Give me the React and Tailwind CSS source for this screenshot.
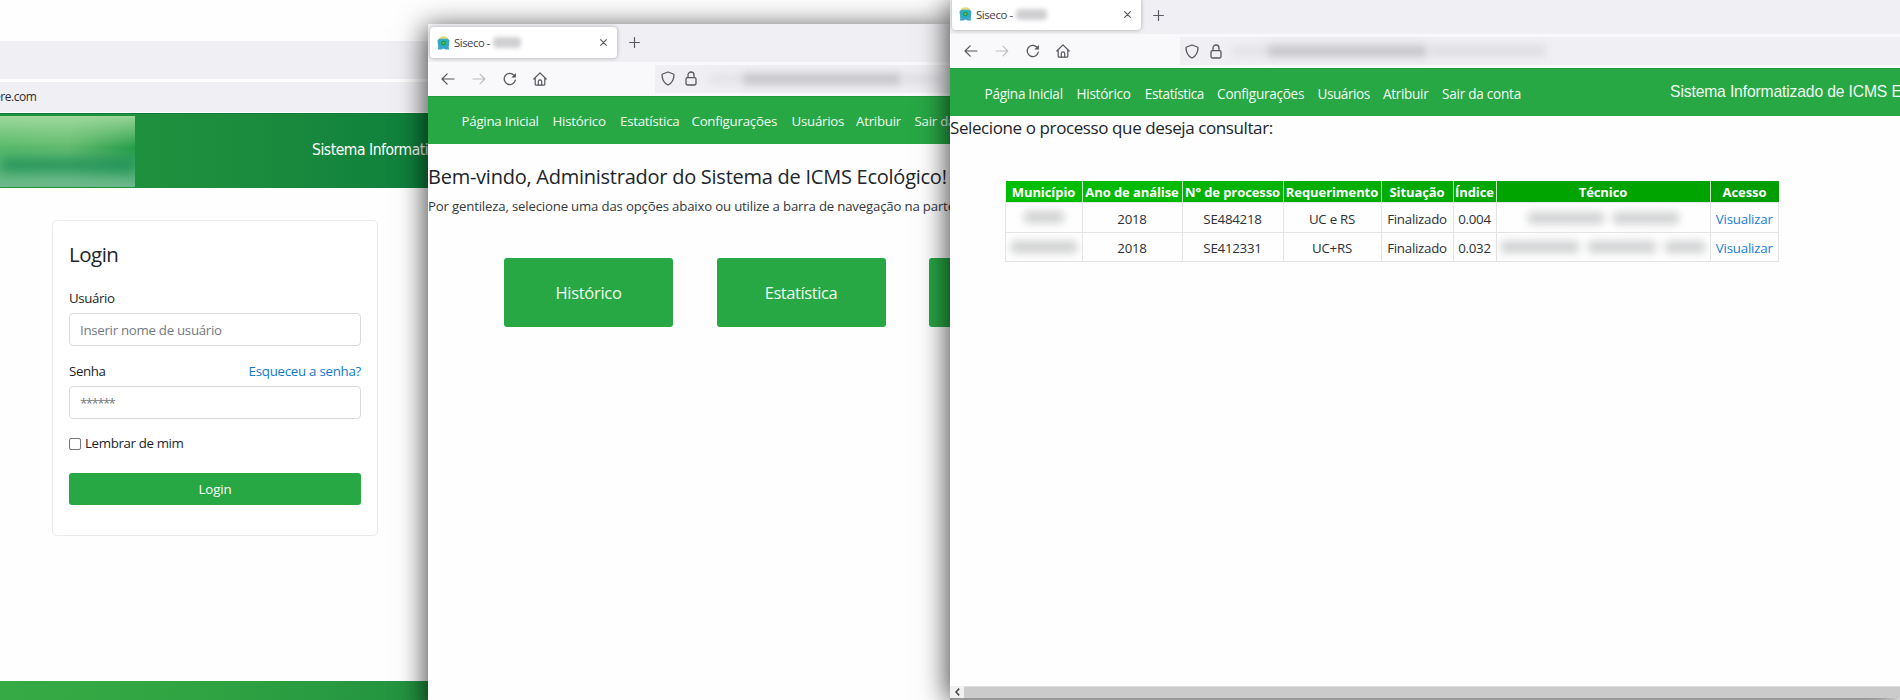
import React from "react";

const Back = ({ className = "" }) => (
  <svg className={className} width="14" height="14" viewBox="0 0 14 14" fill="none" stroke="currentColor" strokeWidth="1.2" strokeLinecap="round" strokeLinejoin="round">
    <path d="M13 7H1.2M6.2 1.8 1 7l5.2 5.2" />
  </svg>
);

const Forward = ({ className = "" }) => (
  <svg className={className} width="14" height="14" viewBox="0 0 14 14" fill="none" stroke="currentColor" strokeWidth="1.1" strokeLinecap="round" strokeLinejoin="round">
    <path d="M1 7h11.6M8 2.2 12.8 7 8 11.8" />
  </svg>
);

const Reload = ({ className = "" }) => (
  <svg className={className} width="14" height="14" viewBox="0 0 14 14" fill="none" stroke="currentColor" strokeWidth="1.3" strokeLinecap="round">
    <path d="M12.3 8.2A5.6 5.6 0 1 1 10.9 3.1" />
    <path d="M12.9 1v4.6H8.3z" fill="currentColor" stroke="none" />
  </svg>
);

const Home = ({ className = "" }) => (
  <svg className={className} width="14" height="14" viewBox="0 0 14 14" fill="none" stroke="currentColor" strokeWidth="1.2" strokeLinecap="round" strokeLinejoin="round">
    <path d="M.8 7 7 .9 13.2 7M2.2 6v6.2q0 1 1 1h7.6q1 0 1-1V6" />
    <path d="M5.3 13V9.6a1.7 1.7 0 0 1 3.4 0V13" />
  </svg>
);

const Shield = ({ className = "" }) => (
  <svg className={className} width="14" height="15" viewBox="0 0 14 15" fill="none" stroke="currentColor" strokeWidth="1.3" strokeLinejoin="round">
    <path d="M7 1 12.4 3q.6.2.6.9C12.9 8.4 10.9 12 7 14 3.1 12 1.1 8.4 1 3.900q0-.7.6-.9z" />
  </svg>
);

const Lock = ({ className = "" }) => (
  <svg className={className} width="12" height="15" viewBox="0 0 12 15" fill="none" stroke="currentColor" strokeWidth="1.3" strokeLinejoin="round">
    <rect x="1" y="6.6" width="10" height="7.4" rx="1.4" />
    <path d="M3 6.5V4a3 3 0 0 1 6 0v2.5" />
  </svg>
);

const Close = () => (
  <svg width="7" height="7" viewBox="0 0 7 7" fill="none" stroke="#55555c" strokeWidth="1.1" strokeLinecap="round">
    <path d="M.6.6l5.800 5.800M6.400.6.6 6.400" />
  </svg>
);

const Plus = () => (
  <svg width="11" height="11" viewBox="0 0 11 11" fill="none" stroke="#5b5b66" strokeWidth="1.2" strokeLinecap="round">
    <path d="M5.5.6v9.800M.6 5.500h9.800" />
  </svg>
);

const Crest = () => (
  <svg className="shrink-0" width="13" height="14" viewBox="0 0 13 14">
    <path d="M1.200 4.500Q1.500.3 6.500.3t5.300 4.200z" fill="#e0dc80" />
    <path d="M.5 4.200 2.500 2.800h8l2 1.400-.8 7.600.6 1.600H8.600L6.500 12.400l-2.100 1H.7l.6-1.600z" fill="#3fa3cb" />
    <path d="M2.800 3.400h7.400v5.600L6.500 11.800 2.800 9z" fill="#22b5b8" />
    <circle cx="6.500" cy="7" r="2.300" fill="#2c8f4e" />
    <circle cx="6.500" cy="7" r="1" fill="#8ec63f" />
  </svg>
);

function Tab({ className, title, smudge }) {
  return (
    <div className={"flex items-center rounded-[4px] bg-white pl-[7px] shadow-[0_0_4px_rgba(0,0,0,0.3)] " + className}>
      <Crest />
      <span className={"ml-[4px] pt-[1px] whitespace-nowrap text-[#3c3c42] " + title}>Siseco -</span>
      <span className={"h-[11px] rounded bg-[#d0d0d3] blur-[2px] " + smudge} />
      <span className="mr-[10px] ml-auto flex">
        <Close />
      </span>
    </div>
  );
}

const links = [
  ["Página Inicial", "w-[91px]", "w-[92px] tracking-[-0.3px]"],
  ["Histórico", "w-[67.5px]", "w-[68.3px] tracking-[-0.27px]"],
  ["Estatística", "w-[71.5px]", "w-[72.3px] tracking-[-0.39px]"],
  ["Configurações", "w-[100px]", "w-[100.4px] tracking-[-0.28px]"],
  ["Usuários", "w-[64.5px]", "w-[65.6px] tracking-[-0.45px]"],
  ["Atribuir", "w-[58.5px]", "w-[59px] tracking-[-0.35px]"],
  ["Sair da conta", "w-[90px]", "w-[90px] tracking-[-0.27px]"],
];

function LoginWindow() {
  return (
    <section className="flex h-[700px] w-[428px] shrink-0 flex-col overflow-hidden bg-[#fefefe] pt-[41px]">
      <div className="h-[38px] shrink-0 bg-[#f0f0f4]" />
      <div className="mt-[3px] flex h-[30px] shrink-0 items-center bg-[#f0f0f4]">
        <span className="ml-[-6px] text-[12px] tracking-[-0.45px] text-[#2c2c33]">ere.com</span>
      </div>
      <header className="mt-[1px] flex h-[75px] shrink-0 items-center border-t border-[#137a33] bg-linear-to-r from-[#1f9440] via-[#1d8e3d] to-[#0e803c]">
        <div className="h-[71px] w-[135px] shrink-0 overflow-hidden bg-linear-to-r from-[#5aba6c] via-[#66bd72] to-[#1e9c48]">
          <div className="h-full w-full bg-linear-to-b from-[#a5dba0]/90 via-[#2fae55]/10 via-45% to-[#6db98c]">
            <div className="flex h-full flex-col justify-end pb-[14px]">
              <div className="h-[16px] w-full bg-[#128a50]/70 blur-[6px]" />
            </div>
          </div>
        </div>
        <span className="ml-[177px] shrink-0 font-['DejaVu_Sans_Condensed','DejaVu_Sans',sans-serif] text-[15.5px] font-normal tracking-[-0.45px] whitespace-nowrap text-white [font-stretch:condensed]">
          Sistema Informatizado
        </span>
      </header>
      <main className="mt-[32px] ml-[52px] flex h-[316px] w-[326px] shrink-0 flex-col rounded-[5px] border border-[#ebebec] bg-white px-[16px] text-[13.3px] text-[#212529]">
        <h1 className="mt-[18px] flex h-[30px] items-center text-[20.5px] tracking-[-0.5px]">Login</h1>
        <label className="mt-[20px] flex h-[20px] items-center tracking-[-0.4px]">Usuário</label>
        <div className="mt-[4px] flex h-[33px] items-center rounded-[4px] border border-[#d8dbde] px-[10px] pt-[2px] tracking-[-0.3px] text-[#757a80]">
          Inserir nome de usuário
        </div>
        <div className="mt-[16px] flex h-[20px] items-center justify-between">
          <label className="tracking-[-0.4px]">Senha</label>
          <a className="tracking-[-0.27px] text-[#1279d3]">Esqueceu a senha?</a>
        </div>
        <div className="mt-[4px] flex h-[33px] items-center rounded-[4px] border border-[#d8dbde] px-[10px] pt-[2px] tracking-[-1.6px] text-[#757a80]">
          ******
        </div>
        <div className="mt-[15px] flex h-[20px] items-center gap-[4px]">
          <span className="h-[12px] w-[12px] rounded-[2px] border border-[#77777c] bg-white" />
          <span className="tracking-[-0.36px]">Lembrar de mim</span>
        </div>
        <button className="mt-[19px] h-[32px] rounded-[3px] bg-[#28a745] pt-[2px] tracking-[-0.13px] text-white">Login</button>
      </main>
      <footer className="mt-auto h-[19.500px] shrink-0 bg-linear-to-r from-[#36ab44] via-[#2fa342] to-[#229240]" />
    </section>
  );
}

function WelcomeWindow() {
  return (
    <section className="relative z-10 mt-[24px] h-[690px] w-[522px] shrink-0 bg-[#fefefe] shadow-[-3px_3px_26px_rgba(0,0,0,0.7)]">
      <div className="flex h-full w-full flex-col overflow-hidden">
        <div className="flex h-[38px] shrink-0 items-start bg-[#f0f0f4] pt-[3px] pl-[2px]">
          <Tab className="h-[31px] w-[187px]" title="text-[11.3px] tracking-[-0.45px]" smudge="ml-[3px] w-[28px]" />
          <span className="mt-[10px] ml-[12px]">
            <Plus />
          </span>
        </div>
        <div className="flex h-[33.5px] shrink-0 items-center bg-[#f9f9fb] pl-[12.500px] text-[#56565c]">
          <Back />
          <Forward className="ml-[17px] text-[#bdbdc2]" />
          <Reload className="ml-[17px]" />
          <Home className="ml-[16px]" />
          <div className="ml-[108px] flex h-[28px] flex-1 items-center bg-[#f0f0f4] pl-[6px]">
            <Shield />
            <Lock className="ml-[10px]" />
            <span className="ml-[11px] h-[10px] w-[34px] rounded bg-[#e3e3e7] blur-[4px]" />
            <span className="h-[12px] w-[160px] rounded bg-[#c6c6ca] blur-[4px]" />
            <span className="h-[10px] w-[40px] rounded bg-[#dedee2] blur-[4px]" />
          </div>
        </div>
        <nav className="flex h-[48px] shrink-0 items-center border-t border-[#229a3e] bg-[#28a745] pt-[4px] pl-[33.5px] text-[13.3px] whitespace-nowrap text-[#effaf1]">
          {links.map(([label, width]) => (
            <a key={label} className={"shrink-0 tracking-[-0.25px] " + width}>
              {label}
            </a>
          ))}
        </nav>
        <h1 className="mt-[19px] flex h-[28px] shrink-0 items-center text-[20px] tracking-[-0.25px] whitespace-nowrap text-[#212529]">
          Bem-vindo, Administrador do Sistema de ICMS Ecológico!
        </h1>
        <p className="mt-[6px] flex h-[20px] shrink-0 items-center text-[13.2px] tracking-[-0.17px] whitespace-nowrap text-[#35393d]">
          Por gentileza, selecione uma das opções abaixo ou utilize a barra de navegação na parte
        </p>
        <div className="mt-[41px] ml-[76px] flex gap-[43.5px] text-[16.5px] text-[#effaf1]">
          <button className="h-[69px] w-[169px] shrink-0 rounded-[3px] bg-[#28a745] pt-[3px] tracking-[-0.3px]">Histórico</button>
          <button className="h-[69px] w-[169px] shrink-0 rounded-[3px] bg-[#28a745] pt-[3px] tracking-[-0.4px]">Estatística</button>
          <button className="h-[69px] w-[169px] shrink-0 rounded-[3px] bg-[#28a745]" />
        </div>
      </div>
    </section>
  );
}

const columns = [
  ["Município", "w-[76.5px] bg-[#02be03]"],
  ["Ano de análise", "w-[100px] bg-[#01ba02]"],
  ["N° de processo", "w-[101px] bg-[#01b402]"],
  ["Requerimento", "w-[98px] bg-[#01af02]"],
  ["Situação", "w-[72px] bg-[#01ab02]"],
  ["Índice", "w-[43px] bg-[#00a801]"],
  ["Técnico", "w-[214px] bg-[#00a401]"],
  ["Acesso", "w-[68.5px] bg-[#009e01]"],
];

const rows = [
  { name: "w-[40px]", values: ["2018", "SE484218", "UC e RS", "Finalizado", "0.004"], people: ["w-[76px]", "w-[66px]"] },
  { name: "w-[66px]", values: ["2018", "SE412331", "UC+RS", "Finalizado", "0.032"], people: ["w-[78px]", "w-[68px]", "w-[40px]"] },
];

function ProcessTable() {
  return (
    <table className="mt-[38.500px] ml-[55px] w-[773px] table-fixed border-collapse text-center text-[13.3px] whitespace-nowrap text-[#2d3136]">
      <thead>
        <tr className="h-[22px]">
          {columns.map(([label, style]) => (
            <th key={label} className={"border-r border-[#c5e9c5] p-0 pt-[1px] text-[13px] leading-[20px] font-bold tracking-[-0.08px] text-white last:border-r-0 " + style}>
              {label}
            </th>
          ))}
        </tr>
      </thead>
      <tbody>
        {rows.map((row) => (
          <tr key={row.values[1]} className="h-[29.5px]">
            <td className="border border-[#e2e4e6] p-0">
              <div className={"mx-auto h-[12px] rounded bg-[#cfd0d1] blur-[4px] " + row.name} />
            </td>
            {row.values.map((value, i) => (
              <td key={i} className="border border-[#e2e4e6] p-0 pt-[3px] leading-[20px] tracking-[-0.25px]">
                {value}
              </td>
            ))}
            <td className="border border-[#e2e4e6] p-0">
              <div className="flex justify-center gap-[9px] pt-[1px]">
                {row.people.map((width) => (
                  <span key={width} className={"h-[12px] rounded bg-[#d0d1d2] blur-[4px] " + width} />
                ))}
              </div>
            </td>
            <td className="border border-[#e2e4e6] p-0 pt-[3px] leading-[20px] tracking-[-0.2px] text-[#1a7fd6]">Visualizar</td>
          </tr>
        ))}
      </tbody>
    </table>
  );
}

function ProcessWindow() {
  return (
    <section className="relative z-20 h-[698px] w-[950px] shrink-0 bg-[#fefefe] shadow-[-3px_3px_26px_rgba(0,0,0,0.7)]">
      <div className="flex h-full w-full flex-col overflow-hidden">
        <div className="flex h-[34px] shrink-0 items-start bg-[#f0f0f4] pl-[2px]">
          <Tab className="mt-[-2px] h-[32px] w-[189px]" title="text-[11.5px] tracking-[-0.44px]" smudge="ml-[3px] w-[31px]" />
          <span className="mt-[10px] ml-[12px]">
            <Plus />
          </span>
        </div>
        <div className="flex h-[34px] shrink-0 items-center bg-[#f9f9fb] pl-[13.500px] text-[#56565c]">
          <Back />
          <Forward className="ml-[17px] text-[#bdbdc2]" />
          <Reload className="ml-[17px]" />
          <Home className="ml-[16px]" />
          <div className="ml-[110.500px] flex h-[28px] flex-1 items-center bg-[#f0f0f4] pl-[5px]">
            <Shield />
            <Lock className="ml-[11px]" />
            <span className="ml-[10px] h-[10px] w-[35px] rounded bg-[#e3e3e7] blur-[4px]" />
            <span className="h-[12px] w-[160px] rounded bg-[#c6c6ca] blur-[4px]" />
            <span className="ml-[2px] h-[10px] w-[117px] rounded bg-[#dcdce0] blur-[4px]" />
          </div>
        </div>
        <nav className="flex h-[48px] shrink-0 items-center border-t border-[#229a3e] bg-[#28a745] pt-[4px] pl-[34.5px] text-[13.6px] whitespace-nowrap text-[#effaf1]">
          {links.map(([label, , style]) => (
            <a key={label} className={"shrink-0 " + style}>
              {label}
            </a>
          ))}
          <span className="mb-[5px] ml-[138px] shrink-0 font-['Liberation_Sans',Arial,sans-serif] text-[15.7px] tracking-[-0.15px]">
            Sistema Informatizado de ICMS E
          </span>
        </nav>
        <p className="flex h-[24px] shrink-0 items-center text-[17px] tracking-[-0.4px] text-[#212529]">
          Selecione o processo que deseja consultar:
        </p>
        <div className="mt-[2px] flex">
          <ProcessTable />
        </div>
        <div className="mt-auto flex h-[12px] shrink-0">
          <div className="flex w-[14px] items-center justify-center bg-[#f0f0f0]">
            <svg width="5" height="8" viewBox="0 0 5 8" fill="none" stroke="#4a4a4a" strokeWidth="1.6">
              <path d="M4.200.6 1 4l3.200 3.400" />
            </svg>
          </div>
          <div className="flex-1 border-t border-[#dedede] bg-[#cbcbcb]" />
        </div>
      </div>
    </section>
  );
}

export default function App() {
  return (
    <div className="flex h-[700px] w-[1900px] items-start overflow-hidden bg-[#fefefe] font-['Open_Sans','Noto_Sans',sans-serif]">
      <LoginWindow />
      <WelcomeWindow />
      <ProcessWindow />
    </div>
  );
}
